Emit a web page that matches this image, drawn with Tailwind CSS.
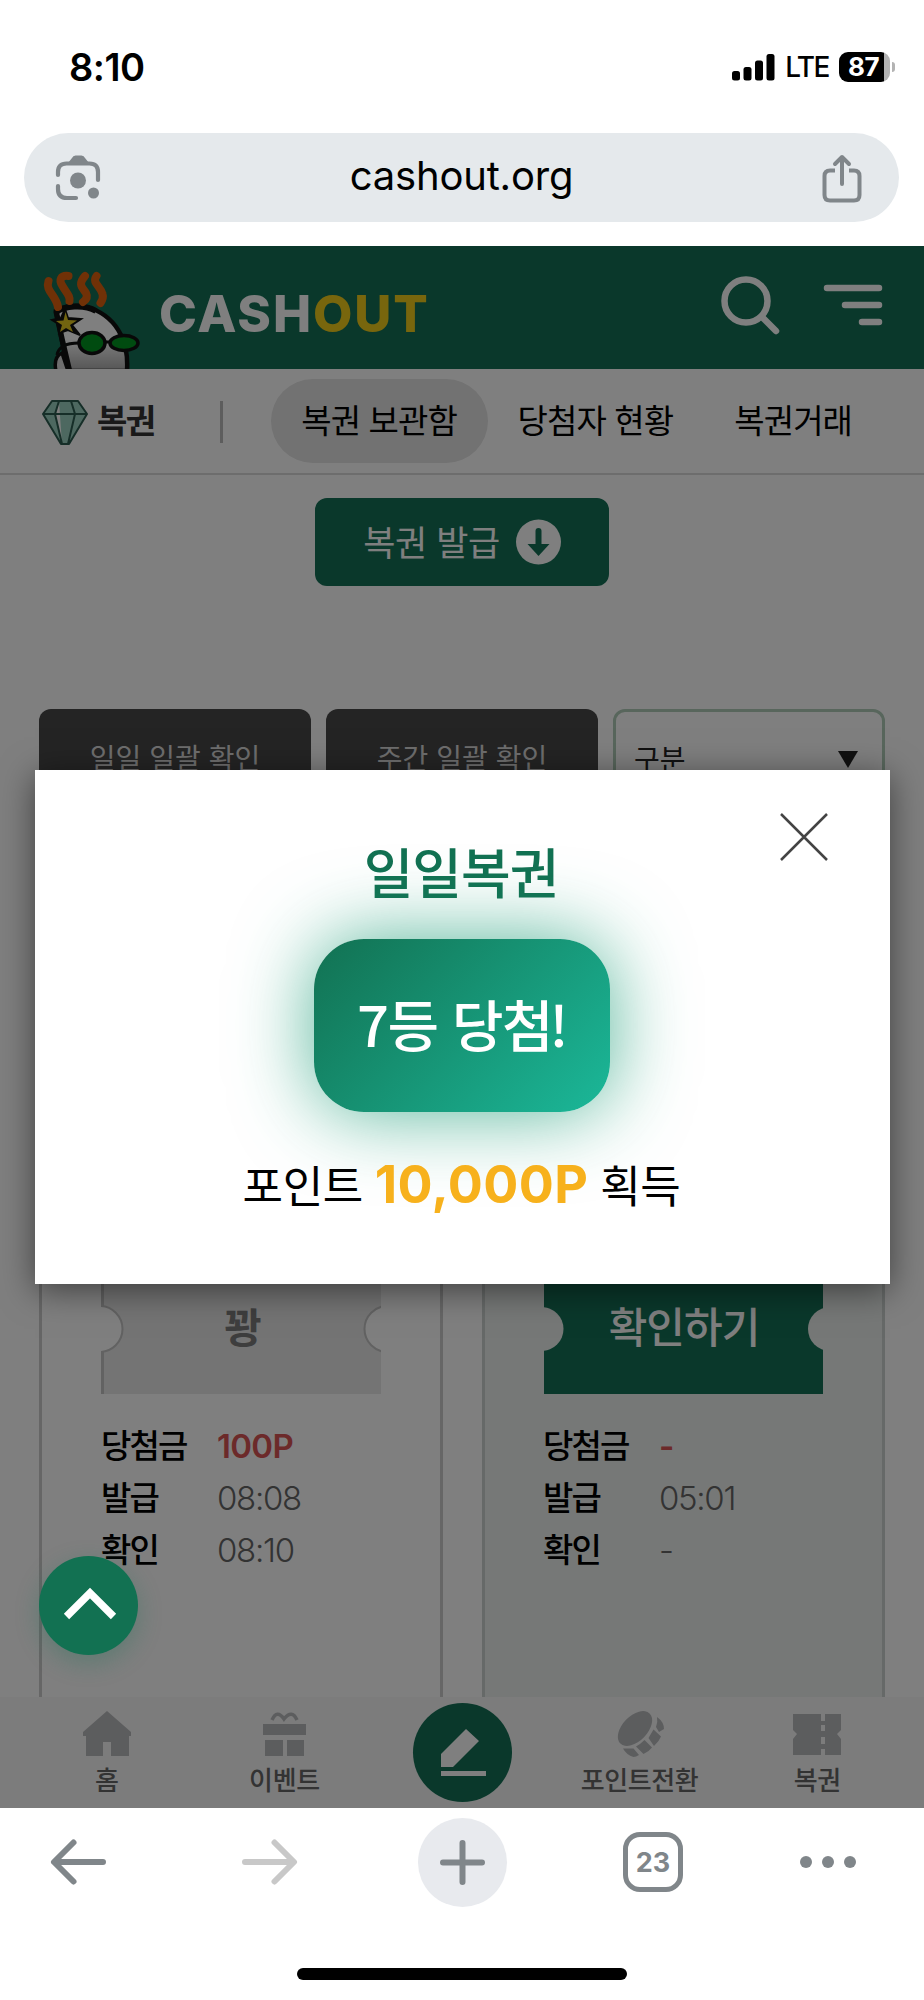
<!DOCTYPE html>
<html lang="ko">
<head>
<meta charset="utf-8">
<title>cashout.org</title>
<script src="https://cdn.jsdelivr.net/npm/@tailwindcss/browser@4"></script>
</head>
<body class="w-[924px] h-[2000px] overflow-hidden bg-white text-black font-['Inter','Noto_Sans_CJK_KR',sans-serif]">

<!-- status bar -->
<div class="h-[133px] pl-[69px] pr-[29px] pt-px flex items-center justify-between">
  <span class="text-[38px] font-semibold tracking-[-0.500px]">8:10</span>
  <div class="flex items-center">
    <svg class="w-[43px] h-[28px]" viewBox="0 0 43 28"><rect x="0" y="18" width="8" height="9.500" rx="2.500"/><rect x="11.500" y="14" width="8" height="13.500" rx="2.500"/><rect x="23" y="7.500" width="8" height="20" rx="2.500"/><rect x="34.500" y="1" width="8" height="26.500" rx="2.500"/></svg>
    <span class="ml-[10px] text-[28px] font-medium tracking-[-1.500px]">LTE</span>
    <div class="ml-[10px] w-[51px] h-[30px] rounded-[9px] bg-[linear-gradient(90deg,#000_0_45px,#b3b3b3_45px)] text-white text-[26px] font-bold leading-[30px] pl-[9px] tracking-[-0.500px]">87</div>
    <div class="ml-[2px] w-[3px] h-[10px] rounded-r-full bg-[#b3b3b3]"></div>
  </div>
</div>

<!-- address bar -->
<div class="ml-[24px] mr-[25px] h-[89px] rounded-full bg-[#e5e9ec] flex items-center justify-between pl-[29px] pr-[32px]">
  <svg class="w-[50px] h-[50px]" viewBox="0 0 50 50" fill="none" stroke="#80868a" stroke-width="4.200"><path d="M5 22v-3q0-8.500 8.500-8.500h23q8.500 0 8.500 8.500v8" stroke-linecap="round"/><path d="M5 33v3q0 9 9 9h9" stroke-linecap="round"/><path d="M15 10l4-5q1-2.500 3.500-2.500h6Q31 2.500 32 5l4 5z" fill="#80868a" stroke="none"/><circle cx="25" cy="27.500" r="8" fill="#80868a" stroke="none"/><circle cx="40.500" cy="40" r="5.500" fill="#80868a" stroke="none"/></svg>
  <span class="text-[40px] tracking-[-0.200px] pb-[3px] pl-[3px]">cashout.org</span>
  <svg class="w-[50px] h-[50px]" viewBox="0 0 50 50" fill="none" stroke="#80868a" stroke-width="4" stroke-linecap="round" stroke-linejoin="round"><path d="M18 17.500h-5q-5.500 0-5.500 5.500v19q0 5.500 5.500 5.500h24q5.500 0 5.500-5.500V23q0-5.500-5.500-5.500h-5" stroke-linecap="butt"/><path d="M25 31V4M18 11l7-7 7 7"/></svg>
</div>

<!-- web page viewport -->
<div class="relative mt-[24px] h-[1562px] overflow-hidden bg-white">

  <!-- header -->
  <header class="h-[123px] bg-[#147056] flex items-center pl-[40px] pr-[41px]">
    <svg class="w-[102px] h-[100px] self-end" viewBox="0 0 102 100">
      <defs><linearGradient id="face" x1="0" y1="0" x2="0" y2="1"><stop offset="0.500" stop-color="#fff"/><stop offset="1" stop-color="#aaa"/></linearGradient></defs>
      <path d="M16 42C38 30 68 40 81 66c5 10 7 20 6 36H28z" fill="url(#face)" stroke="#111" stroke-width="4.500"/>
      <path d="M16 43c8-6 28-8 40-1" fill="none" stroke="#111" stroke-width="6"/>
      <path d="M22 84q-9 4-6 18h12z" fill="#ddd" stroke="#111" stroke-width="3.500"/>
      <path d="M16 42l6 28 8 34" fill="none" stroke="#111" stroke-width="5.500"/>
      <path d="M17 86q2-12 22-12M65 73h6" fill="none" stroke="#111" stroke-width="3"/>
      <g fill="none" stroke="#e0620f" stroke-width="8" stroke-linecap="round" stroke-linejoin="round"><path d="M8.500 12C5 22 16 26 18 38"/><path d="M28.500 7c-8-1-10 4-6 10 4 7 8 10 7 15"/><path d="M45 7c-8 9-2 12 1 17 2 4 0 7-3 9"/><path d="M56.500 7c-5 7 4 10 6 18 1 3 0 6-2 9"/></g>
      <ellipse cx="52" cy="74" rx="13" ry="10.500" fill="#009621" stroke="#111" stroke-width="3.500"/><ellipse cx="84" cy="74" rx="14" ry="7.500" fill="#009621" stroke="#111" stroke-width="3.500"/>
      <path d="M25 40l3 9 13 1-9 6 8 10-12-5-9 3 1-8-8-5 9-2z" fill="#111" stroke="#111" stroke-width="2"/>
      <path d="M25.500 43l2.500 8 9 .5-7 4.500 3 7-7-4-6 4 2-7-6-4 7.500-.5z" fill="#e3c820"/>
    </svg>
    <div class="ml-[17px] text-[51px] leading-none font-extrabold text-white tracking-[1.900px] pt-[12px]">CASH<span class="text-[#f1cc1a]">OUT</span></div>
    <svg class="ml-auto -mt-[6px] w-[60px] h-[60px]" viewBox="0 0 60 60" fill="none" stroke="#fff" stroke-width="6.500" stroke-linecap="round"><circle cx="26" cy="26" r="21.500"/><path d="M42 42l14 14"/></svg>
    <svg class="ml-[43px] -mt-[5px] w-[60px] h-[44px]" viewBox="0 0 60 44" stroke="#fff" stroke-width="6.500" stroke-linecap="round"><path d="M4 5h52M22 22h34M39 39h17"/></svg>
  </header>

  <!-- section navigation -->
  <nav class="h-[106px] border-b-2 border-[#dadada] flex items-center pl-[41px] text-[33px] tracking-[-0.900px] whitespace-nowrap">
    <svg class="mt-[4px] w-[48px] h-[48px]" viewBox="0 0 48 48" fill="#9ad0c0" stroke="#2c5c50" stroke-width="2" stroke-linejoin="round"><path d="M11 2h26l9 13-18 30h-8L2 15zM2 15h44M18 2l-4 13 7 30M30 2l4 13-7 30"/></svg>
    <b class="ml-[8px] mt-[2px] text-[#333] font-bold tracking-[-1.600px]">복권</b>
    <i class="ml-[65px] mt-[2px] w-[3px] h-[42px] bg-[#bbb]"></i>
    <span class="ml-[48px] w-[217px] h-[84px] rounded-full bg-[#e4e4e4] flex items-center justify-center pt-[2px]">복권 보관함</span>
    <span class="ml-[30px] pt-[2px]">당첨자 현황</span>
    <span class="ml-[61px] pt-[2px]">복권거래</span>
  </nav>

  <!-- issue button -->
  <div class="mt-[23px] mx-auto w-[294px] h-[88px] rounded-[12px] bg-[#147056] text-white text-[35px] tracking-[-0.400px] flex items-center justify-center gap-[16px]"><span class="pt-[3px]">복권 발급</span>
    <svg class="w-[45px] h-[46px]" viewBox="0 0 45 46"><circle cx="22.500" cy="23" r="22.500" fill="#fff"/><path d="M22.500 12v18" stroke="#147056" stroke-width="6" stroke-linecap="round"/><path d="M11.500 25h22l-11 12z" fill="#147056"/></svg>
  </div>

  <!-- filters -->
  <div class="mt-[123px] mx-[39px] grid grid-cols-3 gap-[15px] text-[28px]">
    <div class="h-[96px] rounded-[12px] bg-[#484848] text-[#ddd] flex items-center justify-center pt-[3px]">일일 일괄 확인</div>
    <div class="h-[96px] rounded-[12px] bg-[#484848] text-[#ddd] flex items-center justify-center pt-[3px]">주간 일괄 확인</div>
    <div class="h-[96px] rounded-[12px] border-[3px] border-[#b0ccb9] text-[#222] flex items-center justify-between pl-[18px] pr-[24px]"><span class="pt-[5px]">구분</span><svg class="mt-[4px] w-[20px] h-[17px]" viewBox="0 0 20 17"><path d="M0 0h20l-10 17z" fill="#222"/></svg></div>
  </div>

  <!-- tickets -->
  <div class="mt-[53px] mx-[39px] grid grid-cols-[404px_403px] justify-between h-[960px] text-[33px] tracking-[-1.800px]">
    <section class="border-[3px] border-[#cdcdcd] pl-[59px] pt-[421px]">
      <svg class="w-[280px] h-[112px]" viewBox="0 0 280 112"><path d="M0 0h280v112H0z" fill="#e8e8e8"/><path d="M1.500 0v112" stroke="#c4c4c4" stroke-width="3"/><circle cx="-1.500" cy="47" r="23" fill="#fff" stroke="#c4c4c4" stroke-width="2"/><circle cx="286.500" cy="47" r="23" fill="#fff" stroke="#c4c4c4" stroke-width="2"/><text x="141" y="61" text-anchor="middle" font-size="41" font-weight="700" fill="#7c7c7c">꽝</text></svg>
      <div class="mt-[26px] grid grid-cols-[116px_1fr] leading-[52px]">
        <span class="font-medium">당첨금</span><span class="font-semibold text-[#d95555] tracking-[-0.700px]">100P</span>
        <span class="font-medium">발급</span><span class="font-light text-[#666] tracking-[-1.300px]">08:08</span>
        <span class="font-medium">확인</span><span class="font-light text-[#666] tracking-[-1.300px]">08:10</span>
      </div>
    </section>
    <section class="border-[3px] border-[#cdd2d0] bg-[#edf1ef] pl-[59px] pt-[421px]">
      <svg class="w-[279px] h-[112px]" viewBox="0 0 279 112"><path d="M0 0h280v112H0z" fill="#147056"/><circle cx="-2.500" cy="47" r="22" fill="#edf1ef"/><circle cx="286" cy="47" r="22" fill="#edf1ef"/><text x="140" y="61" text-anchor="middle" font-size="42" font-weight="500" letter-spacing="-1" fill="#fff">확인하기</text></svg>
      <div class="mt-[26px] -ml-px grid grid-cols-[116px_1fr] leading-[52px]">
        <span class="font-medium">당첨금</span><span class="font-semibold text-[#d95555]">-</span>
        <span class="font-medium">발급</span><span class="font-light text-[#666] tracking-[-1.300px]">05:01</span>
        <span class="font-medium">확인</span><span class="font-light text-[#666]">-</span>
      </div>
    </section>
  </div>

  <!-- bottom tab bar -->
  <div class="absolute inset-x-0 bottom-0 h-[111px] bg-[#f8f8f8] px-[18px] grid grid-cols-5 justify-items-center text-[26px] font-medium text-[#666] tracking-[-0.400px] leading-[30px]">
    <div class="flex flex-col items-center pt-[13px]"><svg class="w-[50px] h-[48px]" viewBox="0 0 50 48" fill="#b8babd"><path d="M25 1L49 22v4h-2v20H29V32h-8v14H4V26H1v-4z"/></svg><span class="mt-[8px]">홈</span></div>
    <div class="flex flex-col items-center pt-[13px]"><svg class="w-[50px] h-[48px]" viewBox="0 0 50 48" fill="#b8babd"><path d="M4 14h43v11H4zM6 30h18v16H6zM28 30h17v16H28z"/><path d="M13 10q5-11 12-1 8-10 13 1" fill="none" stroke="#b8babd" stroke-width="3.500"/></svg><span class="mt-[8px]">이벤트</span></div>
    <div class="mt-[6px] ml-px size-[99px] rounded-full bg-[#147056]"><svg class="size-[99px]" viewBox="0 0 99 99" fill="#fff"><path d="M28 51L53 26l13 12-26 26H28zM28 68h45v5H28z"/></svg></div>
    <div class="flex flex-col items-center pt-[13px]"><svg class="w-[50px] h-[48px]" viewBox="0 0 50 48" fill="#b8babd"><ellipse cx="20" cy="18.500" rx="21" ry="12.500" transform="rotate(-46 20 18.500)"/><path d="M42 7q7 5 7 12l-5 3-3-5q2-5 1-10zM38.500 19.500l7.500 7q-2 5-7 9.500l-5.500-8zM29.500 30l7.500 7.500q-3 4-8.500 6.500L21 36.500q4-2 8.500-6.500zM18.500 38.500l5.500 6.500q-3 2-5.500 2-7-2-10.500-8.500z"/></svg><span class="mt-[8px]">포인트전환</span></div>
    <div class="flex flex-col items-center pt-[13px]"><svg class="w-[50px] h-[48px]" viewBox="0 0 50 48" fill="#b8babd"><path d="M1 4h28v7h4V4h16v16l-4 4 4 5v16H33v-6h-4v6H1V29l4-5-4-4z"/><path d="M29 15h4v6h-4zM29 27h4v7h-4z" fill="#f8f8f8"/></svg><span class="mt-[8px]">복권</span></div>
  </div>

  <!-- dimming layer -->
  <div class="absolute inset-0 bg-black/50"></div>

  <!-- scroll to top -->
  <div class="absolute left-[39px] top-[1310px] size-[99px] rounded-full bg-[#127152] shadow-[0_8px_24px_rgba(18,113,82,0.3)]"><svg class="size-[99px]" viewBox="0 0 99 99" fill="none" stroke="#fff" stroke-width="7.500"><path d="M27.500 60.500L51 37l23.500 23.500"/></svg></div>

  <!-- result dialog -->
  <div class="absolute left-[35px] top-[524px] w-[855px] h-[514px] bg-white shadow-[0_6px_32px_rgba(0,0,0,0.5)] flex flex-col items-center">
    <svg class="absolute right-[61px] top-[42px] size-[50px]" viewBox="0 0 50 50" stroke="#444" stroke-width="2.500"><path d="M2 2l46 46M48 2L2 48"/></svg>
    <h2 class="mt-[69px] mr-[3px] text-[54px] leading-[72px] font-medium text-[#127152] tracking-[-1px]">일일복권</h2>
    <div class="mt-[28px] mr-px w-[296px] h-[173px] rounded-[50px] bg-[linear-gradient(135deg,#127152,#1bb899)] shadow-[0_0_80px_rgba(25,155,118,0.75)] text-white text-[56px] font-medium font-['Noto_Sans_CJK_KR',sans-serif] tracking-[-1.400px] flex items-center justify-center pb-[6px]">7등 당첨<span class="-ml-[3px]">!</span></div>
    <p class="mt-[37px] mr-[2px] text-[44px] leading-[72px] tracking-[-0.400px] whitespace-nowrap">포인트 <b class="text-[52px] font-bold text-[#f7b11c] tracking-[0.400px]">10,000P</b> 획득</p>
  </div>
</div>

<!-- browser toolbar -->
<div class="h-[108px] pl-[48px] flex items-center">
  <svg class="w-[60px] h-[50px]" viewBox="0 0 60 50" fill="none" stroke="#80868a" stroke-width="6" stroke-linecap="round" stroke-linejoin="round"><path d="M25.500 5.500L6 25l19.500 19.500M7 25h48"/></svg>
  <svg class="ml-[132px] w-[60px] h-[50px]" viewBox="0 0 60 50" fill="none" stroke="#c8c8c8" stroke-width="6" stroke-linecap="round" stroke-linejoin="round"><path d="M34.500 5.500L54 25 34.500 44.500M5 25h48"/></svg>
  <div class="ml-[118px] size-[89px] rounded-full bg-[#e8eaee]"><svg class="size-[89px]" viewBox="0 0 89 89" stroke="#80868a" stroke-width="6" stroke-linecap="round"><path d="M25 44.500h39M44.500 25v39"/></svg></div>
  <div class="ml-[116px] size-[60px] rounded-[17px] border-[5px] border-[#80868a] text-[#80868a] text-[27px] font-bold flex items-center justify-center pt-[2px]">23</div>
  <svg class="ml-[117px] w-[56px] h-[12px]" viewBox="0 0 56 12" fill="#80868a"><circle cx="6" cy="6" r="6"/><circle cx="28" cy="6" r="6"/><circle cx="50" cy="6" r="6"/></svg>
</div>
<div class="mx-auto mt-[52px] w-[330px] h-[12px] rounded-full bg-black"></div>
</body>
</html>
